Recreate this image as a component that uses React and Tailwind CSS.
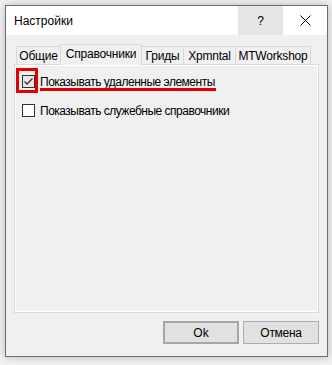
import React from "react";

const TABS = [
    { label: "Общие", w: 45 },
    { label: "Справочники", w: 82, active: true },
    { label: "Гриды", w: 43 },
    { label: "Xpmntal", w: 53 },
    { label: "MTWorkshop", w: 76 },
];

const Checkbox = ({ checked }) => (
    <span
        className={
            "w-[13px] h-[13px] border border-[#333333] flex items-center justify-center shrink-0 " +
            (checked ? "bg-[#e6e6e6]" : "bg-white")
        }
    >
        {checked && (
            <svg width="11" height="11" viewBox="0 0 11 11">
                <path d="M1.5 5.5 L4 8 L9.5 2.5" fill="none" stroke="#333333" strokeWidth="1.3" />
            </svg>
        )}
    </span>
);

const App = () => {
    return (
        <div
            className="w-[332px] h-[365px] bg-[#f2f2f2] pt-[5px] pl-[5px] text-[12px] text-black"
            style={{ fontFamily: '"Liberation Sans", Arial, sans-serif' }}
        >
            <div className="relative w-[323px] h-[352px] border border-[#6e6e6e] bg-[#f0f0f0] flex flex-col shadow-[0_0_8px_rgba(0,0,0,0.25)]">
                {/* title bar */}
                <div className="h-[29px] bg-white flex items-stretch shrink-0">
                    <div className="flex-1 flex items-center pl-[8px] text-[12px]">Настройки</div>
                    <div className="w-[45px] bg-[#e5e5e5] flex items-center justify-center text-[12px]">?</div>
                    <div className="w-[44px] flex items-center justify-center">
                        <svg width="11" height="11" viewBox="0 0 11 11">
                            <path d="M0.5 0.5 L10.5 10.5 M10.5 0.5 L0.5 10.5" stroke="#000" strokeWidth="1" />
                        </svg>
                    </div>
                </div>

                {/* tabs */}
                <div className="mt-[9px] ml-[8px] mr-[8px] flex flex-col">
                    <div className="flex items-end h-[20px] pl-[2px] relative z-10">
                        {TABS.map((t, i) => (
                            <div
                                key={t.label}
                                style={{ width: t.w }}
                                className={
                                    "flex items-center justify-center border-t border-l border-r border-[#d9d9d9] tracking-[-0.2px] " +
                                    (i > 0 ? "-ml-px " : "") +
                                    (t.active
                                        ? "h-[21px] -mb-px bg-[#f0f0f0] relative z-10 pb-[2px]"
                                        : "h-[18px] bg-[#f0f0f0]")
                                }
                            >
                                {t.label}
                            </div>
                        ))}
                    </div>
                    <div className="h-[249px] border border-[#d9d9d9] bg-[#f0f0f0] shadow-[inset_1px_1px_0_#ffffff,inset_-1px_-1px_0_#ffffff] pl-[7px] pt-[8px] flex flex-col">
                        <div className="flex items-center gap-[5px] h-[15px] mt-[1px]">
                            <Checkbox checked />
                            <span className="tracking-[-0.5px]">Показывать удаленные элементы</span>
                        </div>
                        <div className="flex items-center gap-[5px] h-[15px] mt-[14px]">
                            <Checkbox />
                            <span className="tracking-[-0.5px]">Показывать служебные справочники</span>
                        </div>
                    </div>
                </div>

                {/* buttons */}
                <div className="flex justify-end gap-[4px] mr-[8px] mt-[8px]">
                    <button className="w-[76px] h-[23px] border-2 border-[#a6a6a6] bg-[#e1e1e1] flex items-center justify-center">
                        Ok
                    </button>
                    <button className="w-[76px] h-[23px] border border-[#adadad] bg-[#e1e1e1] flex items-center justify-center tracking-[-0.3px]">
                        Отмена
                    </button>
                </div>

                {/* annotations */}
                <div className="absolute left-[10px] top-[62px] w-[22px] h-[25px] border-[3px] border-[#e00000] z-20" />
                <div className="absolute left-[34px] top-[82px] w-[176px] h-[3px] bg-[#e00000] z-20" />
            </div>
        </div>
    );
};

export default App;
